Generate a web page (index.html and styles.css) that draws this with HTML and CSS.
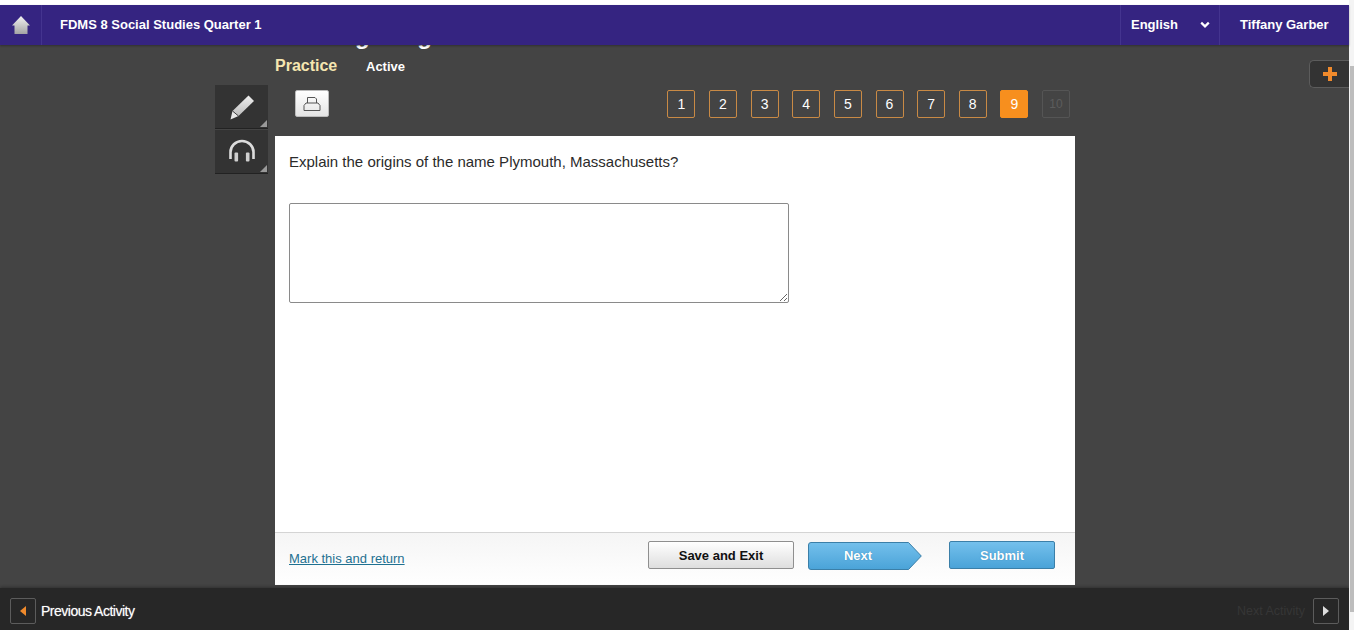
FILE: index.html
```html
<!DOCTYPE html>
<html lang="en">
<head>
<meta charset="utf-8">
<title>FDMS 8 Social Studies Quarter 1</title>
<link rel="stylesheet" href="styles.css">
</head>
<body>
<div class="app">
  <header class="topbar">
    <a class="home" aria-label="Home">
      <svg width="18" height="18" viewBox="0 0 18 18"><defs><linearGradient id="hg" x1="0" y1="0" x2="0" y2="1"><stop offset="0" stop-color="#f2f2f2"/><stop offset="1" stop-color="#a4a4a4"/></linearGradient></defs><path d="M9 0 18 9.500H15.500V18H2.500V9.500H0Z" fill="url(#hg)"/></svg>
    </a>
    <div class="course">FDMS 8 Social Studies Quarter 1</div>
    <div class="lang"><span>English</span>
      <svg width="10" height="8" viewBox="0 0 10 8"><path d="M1.200 1.600 5 5.400 8.800 1.600" fill="none" stroke="#fff" stroke-width="2.200"/></svg>
    </div>
    <div class="user">Tiffany Garber</div>
  </header>

  <main class="stage">
    <div class="column">
      <div class="titlebar">
        <span class="clipped">Reading Long</span>
        <span class="practice">Practice</span>
        <span class="status">Active</span>
      </div>
      <div class="workarea">
        <aside class="tools">
          <button class="tool" aria-label="Annotate">
            <svg width="28" height="28" viewBox="0 0 28 28"><defs><linearGradient id="pg" x1="0" y1="0" x2="0" y2="1"><stop offset="0" stop-color="#f0f0f0"/><stop offset="1" stop-color="#bdbdbd"/></linearGradient></defs><path d="M20.500 2.500 26 8 10.500 23 4.500 18Z" fill="url(#pg)"/><path d="M4.500 18 10.500 23 2.500 26.500Z" fill="#e8e8e8"/><path d="M4.500 18 10.500 23" stroke="#444" stroke-width="1"/></svg>
          </button>
          <button class="tool" aria-label="Listen">
            <svg width="28" height="26" viewBox="0 0 28 26"><path d="M2.500 20V13a11.500 11 0 0 1 23 0v7" fill="none" stroke="#dcdcdc" stroke-width="2.600"/><rect x="6.500" y="13.500" width="3.600" height="9" rx="1" fill="#cfcfcf"/><rect x="17.900" y="13.500" width="3.600" height="9" rx="1" fill="#cfcfcf"/></svg>
          </button>
        </aside>
        <div class="content">
          <div class="toolbar">
            <button class="print" aria-label="Print">
              <svg width="18" height="16" viewBox="0 0 18 16"><path d="M4.500 7V1.500H12L13.500 3V7M1 14.500V9.500L3 7H15L17 9.500V14.500Z" fill="none" stroke="#555" stroke-width="1"/></svg>
            </button>
            <nav class="pager">
              <a class="page">1</a><a class="page">2</a><a class="page">3</a><a class="page">4</a><a class="page">5</a><a class="page">6</a><a class="page">7</a><a class="page">8</a><a class="page current">9</a><a class="page locked">10</a>
            </nav>
          </div>
          <section class="card">
            <div class="question">
              <p class="prompt">Explain the origins of the name Plymouth, Massachusetts?</p>
              <textarea class="answer"></textarea>
            </div>
            <footer class="actions">
              <a class="mark">Mark this and return</a>
              <div class="buttons">
                <button class="btn save">Save and Exit</button>
                <button class="btn next">Next
                  <svg class="next-shape" width="114" height="28" viewBox="0 0 114 28"><defs><linearGradient id="ng" x1="0" y1="0" x2="0" y2="1"><stop offset="0" stop-color="#74c0ec"/><stop offset="1" stop-color="#4aa3d8"/></linearGradient></defs><path d="M3 .5H100.500L113.300 14 100.500 27.500H3A2.500 2.500 0 0 1 .5 25V3A2.500 2.500 0 0 1 3 .5Z" fill="url(#ng)" stroke="#3b7fa8"/></svg>
                </button>
                <button class="btn submit">Submit</button>
              </div>
            </footer>
          </section>
        </div>
      </div>
    </div>
    <button class="expand" aria-label="Expand">
      <svg width="14" height="14" viewBox="0 0 14 14"><path d="M5 0H9V5H14V9H9V14H5V9H0V5H5Z" fill="#f08a2c"/></svg>
    </button>
  </main>

  <footer class="activitybar">
    <div class="prev">
      <a class="arrow" aria-label="Previous"><svg width="8" height="10" viewBox="0 0 8 10"><path d="M7 0V10L1 5Z" fill="#f08a2c"/></svg></a>
      <span>Previous Activity</span>
    </div>
    <div class="nextact">
      <span>Next Activity</span>
      <a class="arrow" aria-label="Next"><svg width="8" height="10" viewBox="0 0 8 10"><path d="M1 0V10L7 5Z" fill="#ddd"/></svg></a>
    </div>
  </footer>
  <div class="scrollbar"><div class="thumb"></div></div>
</div>
</body>
</html>
```
FILE: styles.css
```css
* { box-sizing: border-box; }
html, body { margin: 0; height: 100%; overflow: hidden; background: #fff; }
body { font-family: "Liberation Sans", Arial, sans-serif; }
button { font-family: inherit; padding: 0; }

.app { height: 630px; padding-top: 5px; display: flex; flex-direction: column; position: relative; padding-right: 5px; }

.topbar { height: 40px; flex: none; background: #352481; color: #fff; display: flex; align-items: stretch; font-weight: 700; font-size: 13px; box-shadow: 0 1px 2px rgba(0,0,0,.3); position: relative; z-index: 2; }
.home { width: 42px; display: flex; align-items: center; justify-content: center; border-right: 1px solid #44348f; }
.course { flex: 1; padding-left: 18px; line-height: 39px; }
.lang { width: 100px; border-left: 1px solid #44348f; border-right: 1px solid #44348f; padding: 0 9px 1px 10px; display: flex; align-items: center; justify-content: space-between; }
.user { width: 129px; padding-left: 20px; line-height: 39px; }

.stage { flex: 1; background: #444; position: relative; overflow: hidden; }
.column { width: 860px; margin-left: 215px; }

.titlebar { height: 40px; padding-left: 60px; position: relative; display: flex; align-items: center; padding-top: 1px; color: #fff; font-weight: 700; }
.clipped { position: absolute; left: 60px; top: -23px; font-size: 24px; line-height: 28px; word-spacing: -3px; color: #fff; white-space: nowrap; }
.practice { font-size: 16px; color: #f5e6b0; width: 91px; }
.status { font-size: 13px; padding-top: 2px; }

.workarea { display: flex; }
.tools { width: 60px; display: flex; flex-direction: column; gap: 1px; }
.tool { position: relative; width: 53px; height: 44px; background: #333; border: 0; border-bottom: 1px solid #222; display: flex; align-items: center; justify-content: center; }
.tool::after { content: ""; position: absolute; right: 1px; bottom: 1px; border-style: solid; border-width: 0 0 7px 7px; border-color: transparent transparent #999 transparent; }

.content { flex: 1; }
.toolbar { height: 51px; display: flex; align-items: flex-start; justify-content: space-between; padding: 5px 5px 0 20px; }
.print { width: 34px; height: 27px; background: linear-gradient(#fff, #e4e4e4); border: 1px solid #bbb; border-radius: 2px; display: flex; align-items: center; justify-content: center; }
.pager { display: flex; gap: 13.625px; }
.page { width: 28px; height: 28px; border: 1px solid #c98a45; border-radius: 2px; color: #fff; font-size: 14px; padding-bottom: 1px; display: flex; align-items: center; justify-content: center; }
.page.current { background: #f78f1e; border-color: #f78f1e; }
.page.locked { border-color: #555; color: #5c5c5c; font-size: 12px; }

.card { background: #fff; height: 449px; display: flex; flex-direction: column; }
.question { flex: 1; padding: 17px 14px 0; }
.prompt { margin: 0 0 33px; font-size: 15px; line-height: 17px; color: #2b2b2b; }
.answer { display: block; width: 500px; height: 100px; border: 1px solid #8a8a8a; border-radius: 2px; background: #fff; padding: 0; }

.actions { height: 53px; border-top: 1px solid #d4d4d4; background: linear-gradient(#f5f5f5, #fff); display: flex; align-items: flex-start; justify-content: space-between; padding: 8px 20px 0 14px; }
.mark { font-size: 13px; color: #1f7191; text-decoration: underline; margin-top: 9px; line-height: 17px; }
.buttons { display: flex; align-items: flex-start; gap: 14px; }
.btn { height: 28px; border-radius: 2px; font-size: 13px; font-weight: 700; }
.save { width: 146px; background: linear-gradient(#fff, #dedede); border: 1px solid #8f8f8f; color: #111; }
.next { position: relative; width: 114px; border: 0; background: none; color: #fff; padding: 0 14px 2px 0; margin-top: 1px; margin-right: 13px; z-index: 0; text-shadow: 0 0 1px #2e7fad; }
.next-shape { position: absolute; inset: 0; z-index: -1; }
.submit { width: 106px; background: linear-gradient(#74c0ec, #4aa3d8); border: 1px solid #3b7fa8; color: #fff; text-shadow: 0 0 1px #2e7fad; }

.expand { position: absolute; right: 0; top: 15px; width: 40px; height: 28px; background: #333; border: 1px solid #5c5c5c; border-right: 0; border-radius: 5px 0 0 5px; display: flex; align-items: center; justify-content: center; }

.activitybar { height: 42px; flex: none; background: #272727; display: flex; align-items: center; justify-content: space-between; padding: 4px 10px 0; color: #fff; font-size: 14px; box-shadow: 0 -1px 3px rgba(0,0,0,.3); position: relative; }
.prev, .nextact { display: flex; align-items: center; gap: 5px; }
.prev span { letter-spacing: -.5px; text-shadow: 0 0 1px rgba(255,255,255,.5); }
.nextact { gap: 8px; }
.nextact span { color: #363636; font-size: 12.500px; }
.arrow { width: 26px; height: 26px; border: 1px solid #5c5c5c; border-radius: 2px; display: flex; align-items: center; justify-content: center; }

.scrollbar { position: absolute; right: 0; top: 0; bottom: 0; width: 5px; background: #f4f4f4; }
.thumb { position: absolute; left: 1px; right: 0; top: 66px; height: 546px; background: #bdbdbd; }
```
